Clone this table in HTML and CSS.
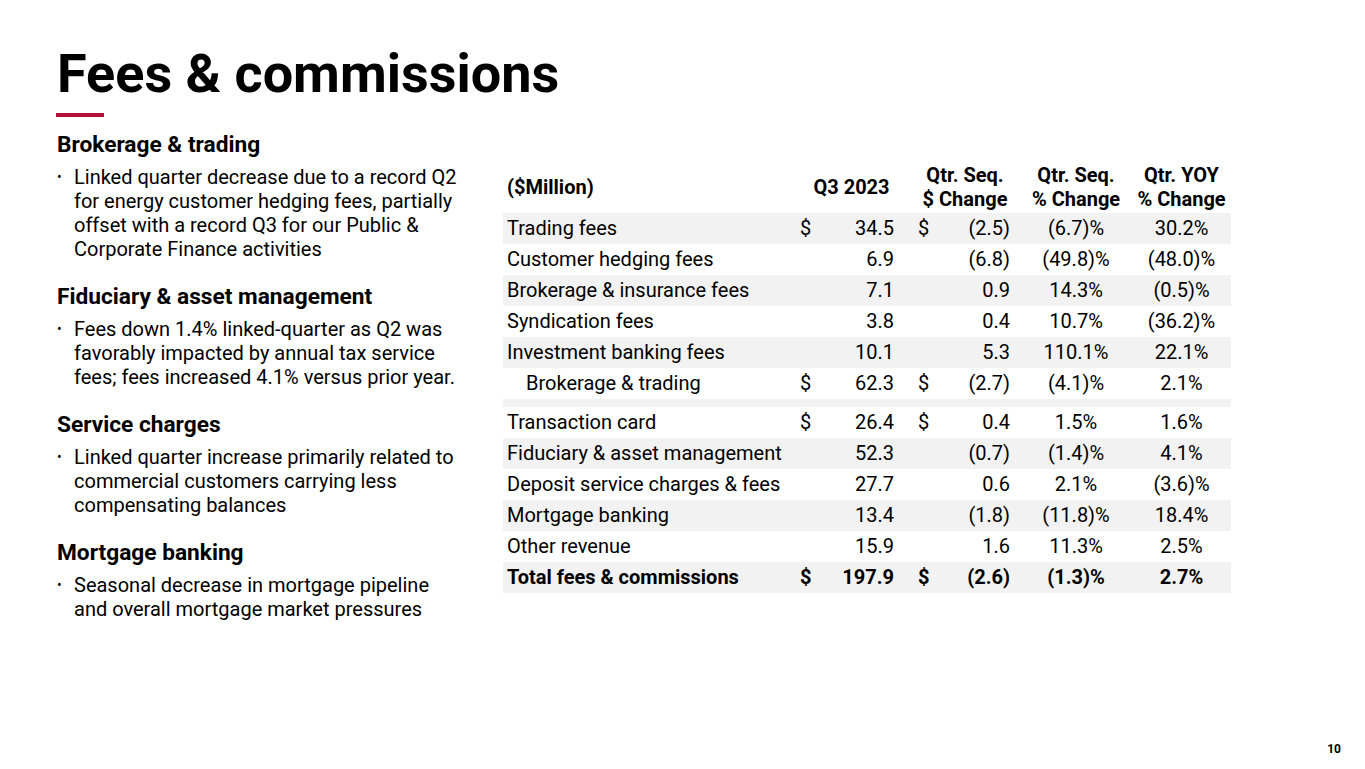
FILE: index.html
```html
<!DOCTYPE html>
<html lang="en">
<head>
<meta charset="utf-8">
<title>Fees &amp; commissions</title>
<link rel="stylesheet" href="styles.css">
</head>
<body>
<div class="slide">
  <header class="head">
    <h1 class="title">Fees &amp; commissions</h1>
    <div class="rule"></div>
  </header>
  <main class="body">
    <section class="notes">
      <h2 class="sub">Brokerage &amp; trading</h2>
      <ul class="bullets">
        <li>Linked quarter decrease due to a record Q2 for energy customer hedging fees, partially offset with a record Q3 for our Public &amp; Corporate Finance activities</li>
      </ul>
      <h2 class="sub">Fiduciary &amp; asset management</h2>
      <ul class="bullets">
        <li>Fees down 1.4% linked-quarter as Q2 was favorably impacted by annual tax service fees; fees increased 4.1% versus prior year.</li>
      </ul>
      <h2 class="sub">Service charges</h2>
      <ul class="bullets">
        <li>Linked quarter increase primarily related to commercial customers carrying less compensating balances</li>
      </ul>
      <h2 class="sub">Mortgage banking</h2>
      <ul class="bullets">
        <li>Seasonal decrease in mortgage pipeline and overall mortgage market pressures</li>
      </ul>
    </section>
    <section class="tablewrap">
      <table class="fees">
        <colgroup>
          <col class="c1"><col class="c2"><col class="c3"><col class="c4"><col class="c5"><col class="c6"><col class="c7">
        </colgroup>
        <thead>
          <tr>
            <th class="lbl">($Million)</th>
            <th colspan="2" class="ctr">Q3 2023</th>
            <th colspan="2" class="ctr">Qtr. Seq.<br>$ Change</th>
            <th class="ctr">Qtr. Seq.<br>% Change</th>
            <th class="ctr">Qtr. YOY<br>% Change</th>
          </tr>
        </thead>
        <tbody>
          <tr class="shade"><td class="lbl">Trading fees</td><td class="cur">$</td><td class="v1">34.5</td><td class="cur2">$</td><td class="v2">(2.5)</td><td class="ctr">(6.7)%</td><td class="ctr">30.2%</td></tr>
          <tr><td class="lbl">Customer hedging fees</td><td class="cur"></td><td class="v1">6.9</td><td class="cur2"></td><td class="v2">(6.8)</td><td class="ctr">(49.8)%</td><td class="ctr">(48.0)%</td></tr>
          <tr class="shade"><td class="lbl">Brokerage &amp; insurance fees</td><td class="cur"></td><td class="v1">7.1</td><td class="cur2"></td><td class="v2">0.9</td><td class="ctr">14.3%</td><td class="ctr">(0.5)%</td></tr>
          <tr><td class="lbl">Syndication fees</td><td class="cur"></td><td class="v1">3.8</td><td class="cur2"></td><td class="v2">0.4</td><td class="ctr">10.7%</td><td class="ctr">(36.2)%</td></tr>
          <tr class="shade"><td class="lbl">Investment banking fees</td><td class="cur"></td><td class="v1">10.1</td><td class="cur2"></td><td class="v2">5.3</td><td class="ctr">110.1%</td><td class="ctr">22.1%</td></tr>
          <tr><td class="lbl indent">Brokerage &amp; trading</td><td class="cur">$</td><td class="v1">62.3</td><td class="cur2">$</td><td class="v2">(2.7)</td><td class="ctr">(4.1)%</td><td class="ctr">2.1%</td></tr>
          <tr class="shade spacer"><td colspan="7"></td></tr>
          <tr><td class="lbl">Transaction card</td><td class="cur">$</td><td class="v1">26.4</td><td class="cur2">$</td><td class="v2">0.4</td><td class="ctr">1.5%</td><td class="ctr">1.6%</td></tr>
          <tr class="shade"><td class="lbl">Fiduciary &amp; asset management</td><td class="cur"></td><td class="v1">52.3</td><td class="cur2"></td><td class="v2">(0.7)</td><td class="ctr">(1.4)%</td><td class="ctr">4.1%</td></tr>
          <tr><td class="lbl">Deposit service charges &amp; fees</td><td class="cur"></td><td class="v1">27.7</td><td class="cur2"></td><td class="v2">0.6</td><td class="ctr">2.1%</td><td class="ctr">(3.6)%</td></tr>
          <tr class="shade"><td class="lbl">Mortgage banking</td><td class="cur"></td><td class="v1">13.4</td><td class="cur2"></td><td class="v2">(1.8)</td><td class="ctr">(11.8)%</td><td class="ctr">18.4%</td></tr>
          <tr><td class="lbl">Other revenue</td><td class="cur"></td><td class="v1">15.9</td><td class="cur2"></td><td class="v2">1.6</td><td class="ctr">11.3%</td><td class="ctr">2.5%</td></tr>
          <tr class="shade total"><td class="lbl">Total fees &amp; commissions</td><td class="cur">$</td><td class="v1">197.9</td><td class="cur2">$</td><td class="v2">(2.6)</td><td class="ctr">(1.3)%</td><td class="ctr">2.7%</td></tr>
        </tbody>
      </table>
    </section>
  </main>
  <footer class="pagenum">10</footer>
</div>
</body>
</html>
```

FILE: styles.css
```css
html, body {
  margin: 0;
  padding: 0;
  background: #ffffff;
}

.slide {
  width: 1365px;
  height: 769px;
  position: relative;
  box-sizing: border-box;
  padding: 42px 0 0 57px;
  font-family: Roboto, "Liberation Sans", sans-serif;
  color: #000000;
  overflow: hidden;
}

.title {
  margin: 0;
  font-size: 54px;
  font-weight: 700;
  line-height: 63px;
  letter-spacing: 0;
}

.rule {
  width: 48px;
  height: 4px;
  background: #b0103a;
  margin: 8px 0 0 -1px;
}

.body {
  display: flex;
  align-items: flex-start;
  gap: 44px;
  margin-top: 16px;
}

.notes {
  width: 402px;
  flex: none;
}

.sub {
  margin: 0;
  font-size: 22.7px;
  font-weight: 700;
  line-height: 24px;
}

.sub + .bullets {
  margin-top: 8px;
}

.bullets {
  margin: 0 0 24px 0;
  padding: 0;
  list-style: none;
}

.bullets li {
  position: relative;
  padding-left: 17px;
  font-size: 20px;
  line-height: 24px;
}

.bullets li::before {
  content: "\2022";
  position: absolute;
  left: 0;
  top: 0;
  font-size: 14px;
}

.tablewrap {
  margin-top: 30px;
}

.fees {
  border-collapse: collapse;
  table-layout: fixed;
  width: 728px;
  font-size: 20px;
}

.c1 { width: 290px; }
.c2 { width: 25px; }
.c3 { width: 92px; }
.c4 { width: 25px; }
.c5 { width: 85px; }
.c6 { width: 112px; }
.c7 { width: 99px; }

.fees th {
  font-weight: 700;
  line-height: 24px;
  vertical-align: middle;
  padding: 0 0 2px 0;
  white-space: nowrap;
}

.fees td {
  height: 31px;
  padding: 0;
  line-height: 31px;
  white-space: nowrap;
}

.fees .lbl {
  text-align: left;
  padding-left: 4px;
}

.fees .indent {
  padding-left: 23px;
}

.fees .cur {
  padding-left: 7px;
  text-align: left;
}

.fees .cur2 {
  padding-left: 8px;
  text-align: left;
}

.fees .v1 {
  text-align: right;
  padding-right: 16px;
}

.fees .v2 {
  text-align: right;
  padding-right: 10px;
}

.fees .ctr {
  text-align: center;
}

.fees .shade td {
  background: #f2f2f2;
}

.fees .spacer td {
  height: 8px;
  line-height: 8px;
}

.fees .total td {
  font-weight: 700;
}

.pagenum {
  position: absolute;
  right: 24px;
  bottom: 13px;
  font-size: 12px;
  font-weight: 700;
  line-height: 14px;
}
```
